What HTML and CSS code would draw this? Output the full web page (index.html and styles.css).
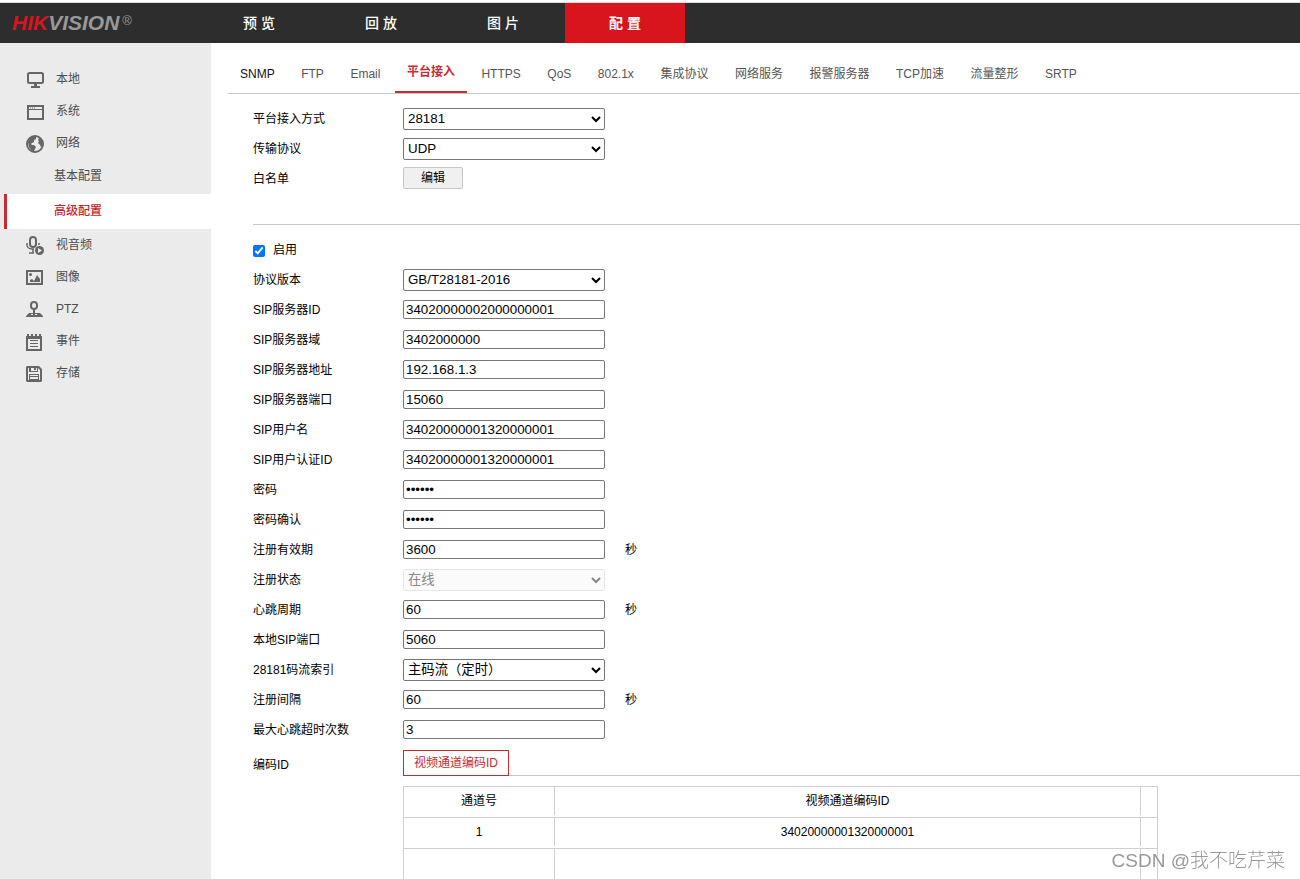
FILE: index.html
```html
<!DOCTYPE html>
<html lang="zh-CN">
<head>
<meta charset="utf-8">
<title>HIKVISION</title>
<link rel="stylesheet" href="styles.css">
</head>
<body>
<header class="topbar">
  <div class="logo"><span class="logo-red">HIK</span><span>VISION</span><span class="logo-mark">®</span></div>
  <nav class="topnav">
    <a href="#">预 览</a>
    <a href="#">回 放</a>
    <a href="#">图 片</a>
    <a href="#" class="active">配 置</a>
  </nav>
</header>
<div class="layout">
  <nav class="sidebar">
    <a href="#" class="side-item">
      <svg class="icon" viewBox="0 0 18 20"><rect x="2" y="4" width="15" height="10" rx="1.500" fill="none" stroke="#666" stroke-width="2"/><path d="M8 15h3v2h3v2H5v-2h3z" fill="#666"/></svg>本地</a>
    <a href="#" class="side-item">
      <svg class="icon" viewBox="0 0 18 20"><path d="M1 4h17v15H1zM3 9v8h13V9zM3 6v2h13V6z" fill="#666" fill-rule="evenodd"/><path d="M4 6.500h1v1H4zm2 0h1v1H6zm2 0h1v1H8z" fill="#666"/></svg>系统</a>
    <a href="#" class="side-item">
      <svg class="icon" viewBox="0 0 18 20"><circle cx="9" cy="11" r="8" fill="#ebebeb" stroke="#666" stroke-width="2"/><path d="M2 9l2-4 4-2 2 1v2L8 7v2L6 10l-1 1 1 1h2l2 2-1 2-1 2H6l-3-4zM13 5l2 1 2 4v3l-2 1-1-2-2-2 1-2-1-1z" fill="#666"/></svg>网络</a>
    <a href="#" class="side-sub">基本配置</a>
    <a href="#" class="side-sub active">高级配置</a>
    <a href="#" class="side-item">
      <svg class="icon" viewBox="0 0 18 20"><rect x="4" y="2" width="6" height="10" rx="3" fill="none" stroke="#666" stroke-width="2"/><path d="M1 8v2c0 2 2 4 5 4h2M7 14v4M3 18h5M13 8v2" fill="none" stroke="#666" stroke-width="1.500"/><circle cx="13.500" cy="15.500" r="4.500" fill="#666"/><path d="M12 13l4 2.500-4 2.500z" fill="#ebebeb"/></svg>视音频</a>
    <a href="#" class="side-item">
      <svg class="icon" viewBox="0 0 18 20"><path d="M0 3h17v15H0zM2 5v11h13V5z" fill="#666" fill-rule="evenodd"/><circle cx="4.500" cy="7.500" r="1.500" fill="#666"/><path d="M4 15v-2l2-1 2 2 3-6 3 4v3z" fill="#666"/></svg>图像</a>
    <a href="#" class="side-item">
      <svg class="icon" viewBox="0 0 18 20"><rect x="5" y="3" width="6" height="7" rx="3" fill="none" stroke="#666" stroke-width="2"/><path d="M7 10h2v4h5l3 3v1H0v-1l3-3h4z" fill="#666"/><path d="M5 15.500h2m2 0h2" stroke="#ebebeb"/></svg>PTZ</a>
    <a href="#" class="side-item">
      <svg class="icon" viewBox="0 0 18 20"><path d="M0 5h16v15H0zM2 8v10h12V8z" fill="#666" fill-rule="evenodd"/><path d="M1 3h2v3H1zm4 0h2v3H5zm4 0h2v3H9zm4 0h2v3h-2zM4 9h8v1H4zm0 3h8v1H4zm0 3h8v1H4z" fill="#666"/></svg>事件</a>
    <a href="#" class="side-item">
      <svg class="icon" viewBox="0 0 18 20"><path d="M1 3h12l3 3v12l-1 1H1l-1-1V4zM2 5v12h12V7l-2-2z" fill="#666" fill-rule="evenodd"/><path d="M3 4h2v4h6V4h1v5H3zM8 4h2v3H8zM3 11h10v6H3zM4 12v1h8v-1zm0 2v2h8v-2z" fill="#666" fill-rule="evenodd"/></svg>存储</a>
  </nav>
  <main class="content">
    <nav class="tabs">
      <div class="tab-list">
        <a href="#" class="dark">SNMP</a>
        <a href="#">FTP</a>
        <a href="#">Email</a>
        <a href="#" class="active">平台接入</a>
        <a href="#">HTTPS</a>
        <a href="#">QoS</a>
        <a href="#">802.1x</a>
        <a href="#">集成协议</a>
        <a href="#">网络服务</a>
        <a href="#">报警服务器</a>
        <a href="#">TCP加速</a>
        <a href="#">流量整形</a>
        <a href="#">SRTP</a>
      </div>
    </nav>
    <form class="form">
      <section class="group">
        <div class="row"><label for="mode">平台接入方式</label><select id="mode"><option>28181</option></select></div>
        <div class="row"><label for="proto">传输协议</label><select id="proto"><option>UDP</option></select></div>
        <div class="row"><label for="white">白名单</label><button type="button" id="white" class="edit">编辑</button></div>
      </section>
      <section class="group">
        <div class="check-row"><input type="checkbox" id="enable" checked><label for="enable">启用</label></div>
        <div class="row"><label for="ver">协议版本</label><select id="ver"><option>GB/T28181-2016</option></select></div>
        <div class="row"><label for="sid">SIP服务器ID</label><input id="sid" type="text" value="34020000002000000001"></div>
        <div class="row"><label for="sdom">SIP服务器域</label><input id="sdom" type="text" value="3402000000"></div>
        <div class="row"><label for="saddr">SIP服务器地址</label><input id="saddr" type="text" value="192.168.1.3"></div>
        <div class="row"><label for="sport">SIP服务器端口</label><input id="sport" type="text" value="15060"></div>
        <div class="row"><label for="user">SIP用户名</label><input id="user" type="text" value="34020000001320000001"></div>
        <div class="row"><label for="auth">SIP用户认证ID</label><input id="auth" type="text" value="34020000001320000001"></div>
        <div class="row"><label for="pw">密码</label><input id="pw" type="password" value="123456"></div>
        <div class="row"><label for="pw2">密码确认</label><input id="pw2" type="password" value="123456"></div>
        <div class="row"><label for="valid">注册有效期</label><input id="valid" type="text" value="3600"><span class="unit">秒</span></div>
        <div class="row"><label for="state">注册状态</label><select id="state" disabled><option>在线</option></select></div>
        <div class="row"><label for="beat">心跳周期</label><input id="beat" type="text" value="60"><span class="unit">秒</span></div>
        <div class="row"><label for="lport">本地SIP端口</label><input id="lport" type="text" value="5060"></div>
        <div class="row"><label for="stream">28181码流索引</label><select id="stream"><option>主码流（定时）</option></select></div>
        <div class="row"><label for="gap">注册间隔</label><input id="gap" type="text" value="60"><span class="unit">秒</span></div>
        <div class="row"><label for="max">最大心跳超时次数</label><input id="max" type="text" value="3"></div>
        <div class="code-row">
          <span class="code-label">编码ID</span>
          <div class="code-body">
            <div class="code-tabs"><button type="button">视频通道编码ID</button></div>
            <table class="channels">
              <thead><tr><th class="col-no"><div>通道号</div></th><th><div>视频通道编码ID</div></th><th class="col-end"></th></tr></thead>
              <tbody>
                <tr><td><div>1</div></td><td><div>34020000001320000001</div></td><td></td></tr>
                <tr><td><div></div></td><td><div></div></td><td></td></tr>
              </tbody>
            </table>
          </div>
        </div>
      </section>
    </form>
  </main>
</div>
<div class="watermark">CSDN @我不吃芹菜</div>
</body>
</html>
```
FILE: styles.css
```css
* { box-sizing: border-box; }
body {
  margin: 0;
  min-height: 100vh;
  display: flex;
  flex-direction: column;
  background: #fff;
  color: #000;
  font: 12px/16px "Liberation Sans", "Noto Sans CJK SC", sans-serif;
}
a { color: inherit; text-decoration: none; }

.topbar {
  display: flex;
  margin-top: 2px;
  border-top: 1px solid #dcdcdc;
  background: #2d2d2d;
}
.logo {
  display: flex;
  width: 199px;
  padding-left: 12px;
  color: #999;
  font-size: 21px;
  font-weight: bold;
  font-style: italic;
  line-height: 40px;
}
.logo-red { color: #d7151c; }
.logo-mark {
  margin-left: 3px;
  font-size: 13px;
  font-weight: normal;
  font-style: normal;
  line-height: 36px;
}
.topnav { display: flex; gap: 2px; }
.topnav a {
  width: 120px;
  color: #fff;
  font-size: 14px;
  font-weight: 500;
  line-height: 40px;
  text-align: center;
}
.topnav .active { background: #d8151c; font-weight: bold; }

.layout { display: flex; flex: 1; }
.sidebar {
  flex: none;
  width: 211px;
  padding-top: 20px;
  background: #ebebeb;
  color: #4d4d4d;
}
.side-item {
  display: flex;
  align-items: center;
  gap: 12px;
  height: 32px;
  padding-left: 26px;
}
.icon { width: 18px; height: 20px; }
.side-sub {
  display: block;
  margin-left: 4px;
  padding-left: 50px;
  line-height: 35px;
}
.side-sub.active {
  padding-left: 47px;
  border-left: 3px solid #cb2a31;
  background: #fff;
  color: #cb1f2a;
  font-weight: 500;
}

.content { flex: 1; min-width: 0; padding-left: 17px; }
.tabs { border-bottom: 1px solid #c6c6c6; color: #555; }
.tab-list {
  display: flex;
  justify-content: space-between;
  max-width: 861px;
  height: 50px;
}
.tabs a {
  display: flex;
  align-items: center;
  padding: 12px 12px 0;
  white-space: nowrap;
}
.tabs .dark { color: #111; }
.tabs .active {
  padding-top: 10px;
  border-bottom: 2px solid #cb2a31;
  color: #cb2a31;
  font-weight: bold;
}

.form { padding-left: 25px; }
.group { padding: 10px 0 0; }
.group + .group { margin-top: 30px; border-top: 1px solid #c6c6c6; }
.row { display: flex; align-items: center; height: 30px; }
.row label { width: 150px; }
.row select, .row input {
  width: 202px;
  border: 1px solid #767676;
  border-radius: 2px;
  background: #fff;
  font-family: "Liberation Sans", "Noto Sans CJK SC", sans-serif;
}
.row select { height: 22px; padding-bottom: 2px; color: #000; }
.row select:disabled { border-color: #ddd; background: #fafafa; color: #555; }
.row input { height: 19px; margin: 0 0 2px; padding: 0 2px; }
.edit {
  width: 60px;
  height: 22px;
  margin: 0 0 2px;
  padding: 0;
  border: 1px solid #c6c6c6;
  border-radius: 2px;
  background: #f0f0f0;
  color: #000;
  font: inherit;
}
.unit { margin-left: 20px; }
.check-row { display: flex; align-items: center; gap: 8px; height: 30px; }
.check-row input { width: 12px; height: 12px; margin: 2px 0 0; }

.code-row { display: flex; padding-top: 5px; }
.code-label { width: 150px; line-height: 30px; }
.code-body { flex: 1; }
.code-tabs { display: flex; height: 26px; border-bottom: 1px solid #c6c6c6; }
.code-tabs button {
  height: 26px;
  padding: 0 10px;
  border: 1px solid #cb2a31;
  background: #fff;
  color: #cb2a31;
  font: inherit;
}
.channels {
  width: 100%;
  max-width: 755px;
  margin-top: 10px;
  border: 1px solid #d0d0d0;
  border-bottom: 0;
  border-spacing: 0;
  table-layout: fixed;
}
.channels .col-no { width: 151px; }
.channels .col-end { width: 16px; }
.channels th, .channels td {
  height: 31px;
  padding: 0 0 2px;
  border-bottom: 1px solid #d0d0d0;
  font-weight: normal;
  text-align: center;
}
.channels tbody tr:last-child td { height: 30px; border-bottom: 0; padding: 0; }
.channels div { height: 28px; border-right: 1px solid #d0d0d0; line-height: 28px; }
.channels tbody tr:last-child div { height: 30px; }

.watermark {
  position: fixed;
  right: 15px;
  bottom: 6px;
  color: #999;
  font-size: 19px;
  font-weight: 300;
  line-height: 24px;
  text-shadow: 1px 1px 0 #fff;
}
```
